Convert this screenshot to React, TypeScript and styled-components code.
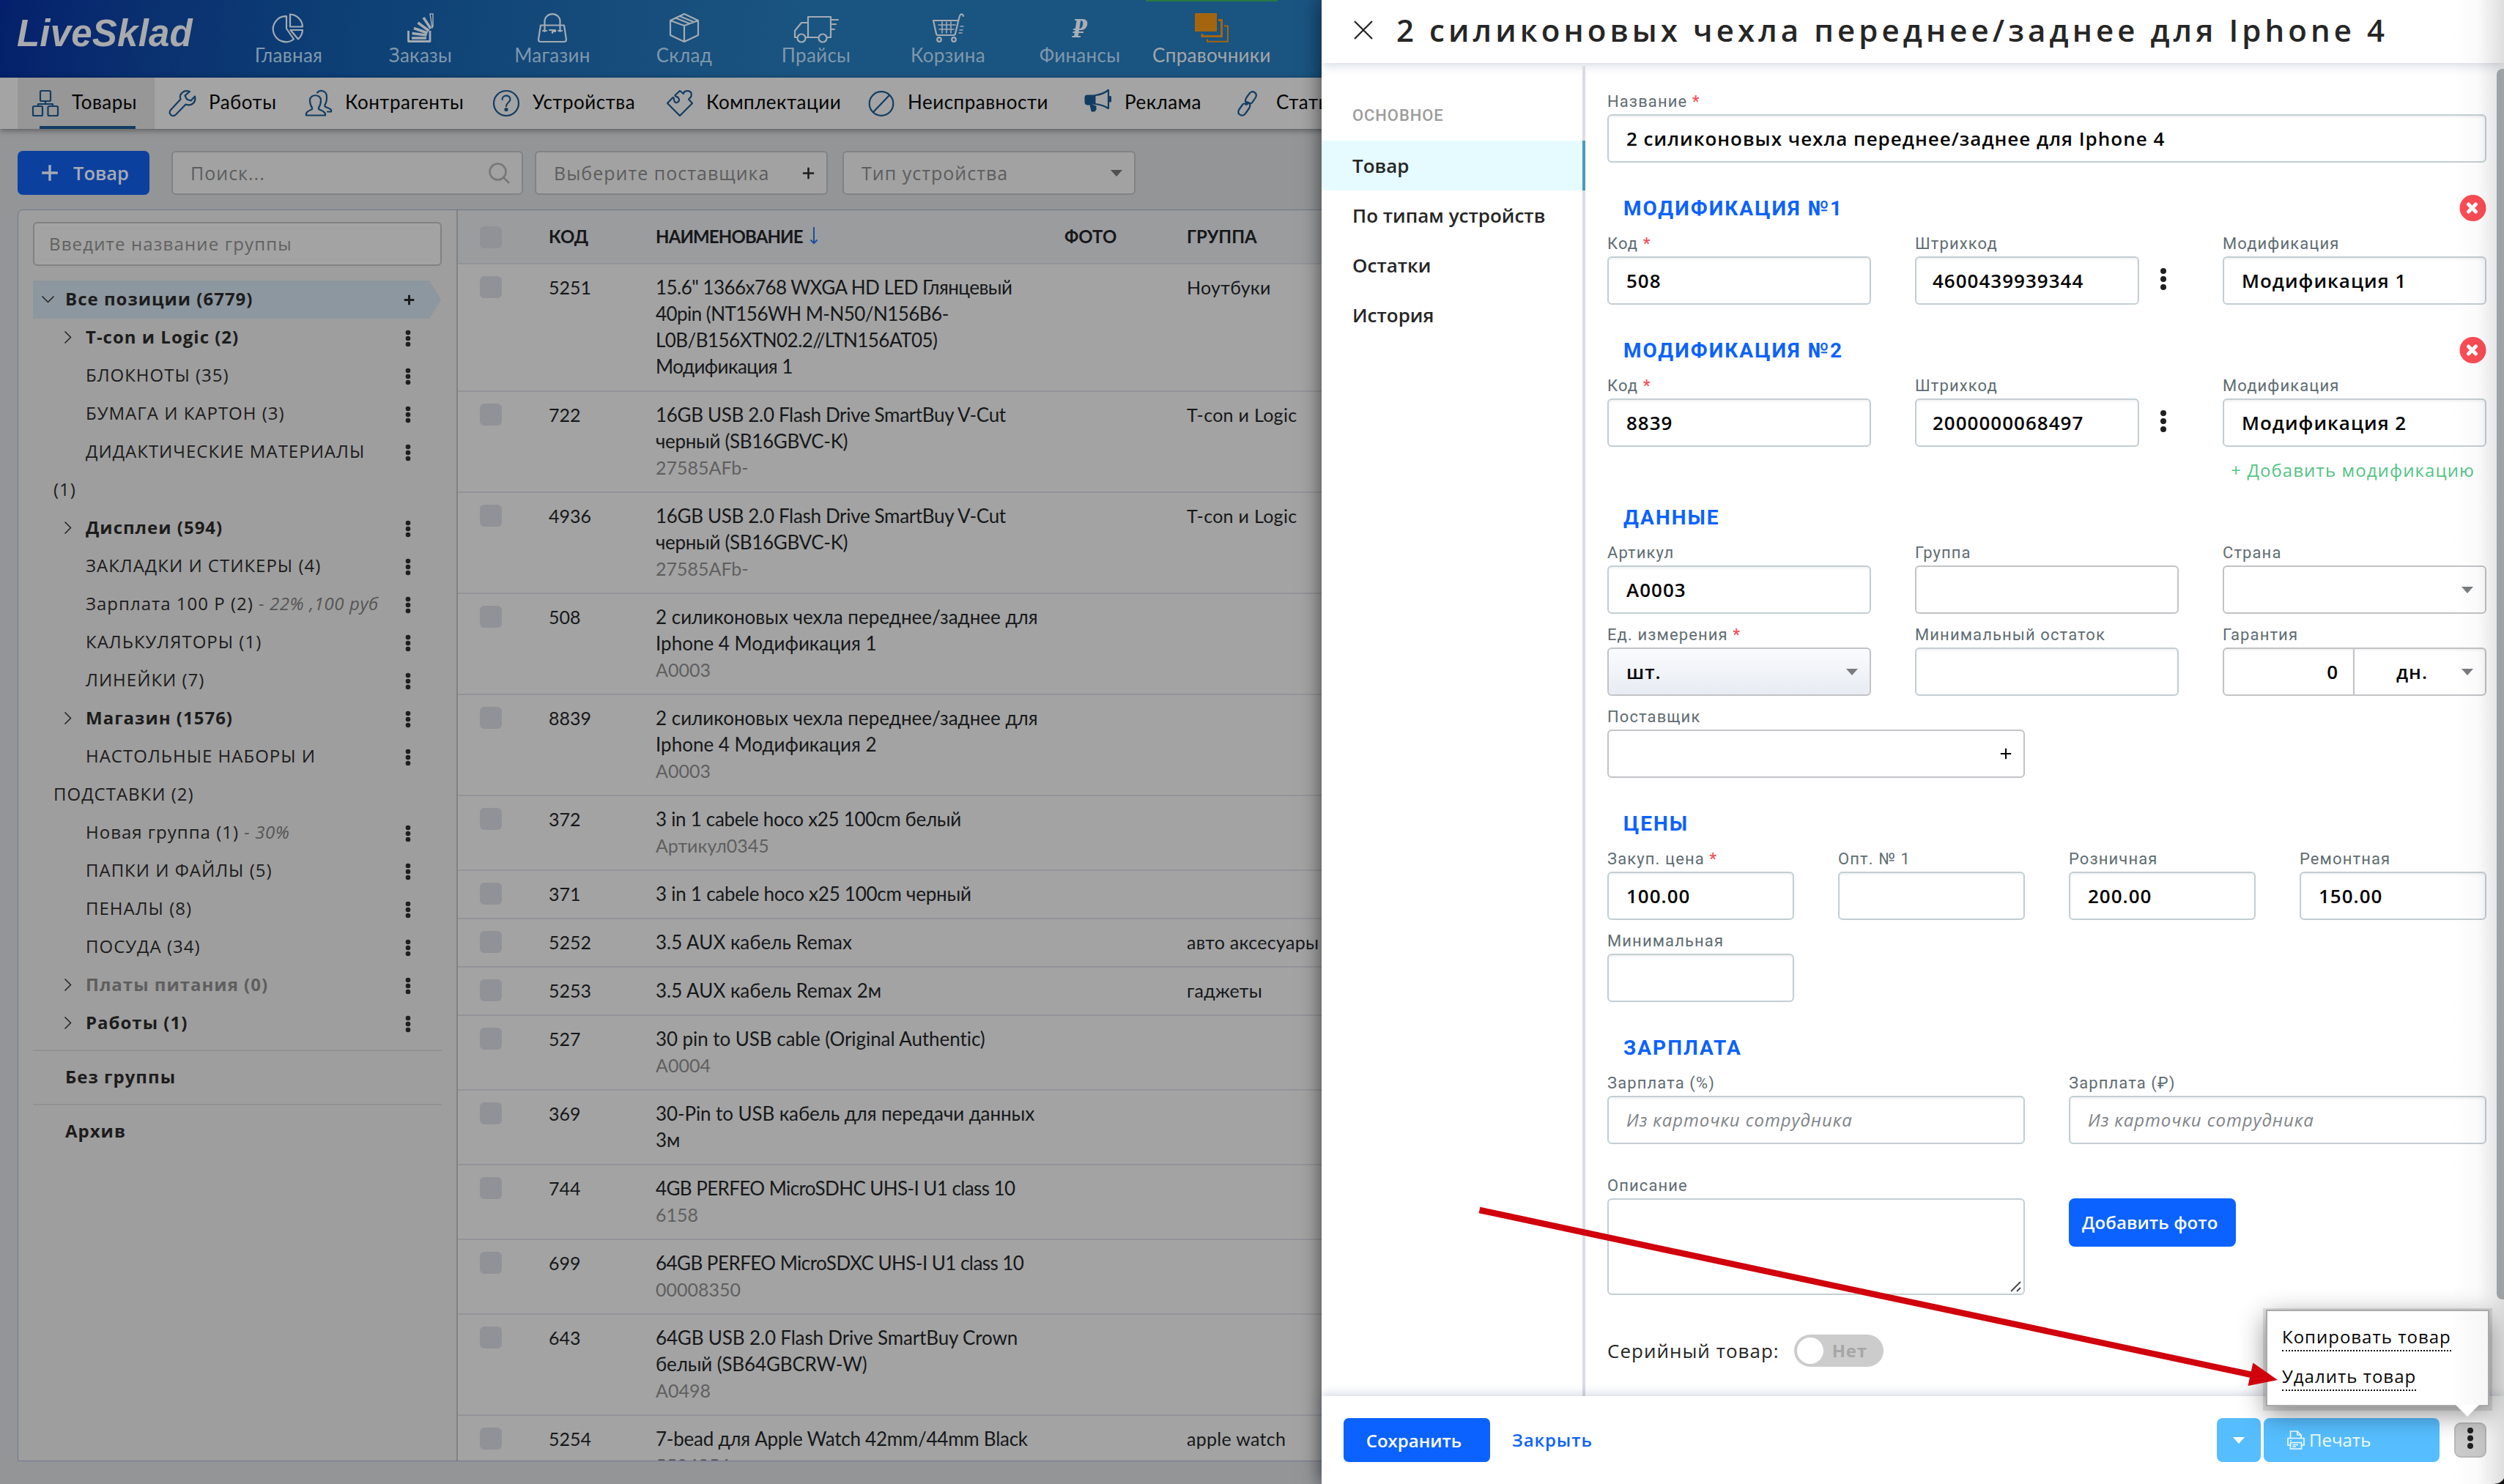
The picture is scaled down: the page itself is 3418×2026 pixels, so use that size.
import React from "react";
import styled, { createGlobalStyle, css } from "styled-components";

const ui = `"Open Sans", "Noto Sans", sans-serif`;
const grotesk = `Lato, Inter, sans-serif`;
const label = `Roboto, sans-serif`;

const GlobalStyle = createGlobalStyle`
  *, *::before, *::after { box-sizing: border-box; }
  html, body { margin: 0; padding: 0; background: #939597; }
  body { width: 3418px; height: 2026px; overflow: hidden; font-family: ${ui}; }
  button { font: inherit; border: 0; padding: 0; background: none; cursor: pointer; }
`;

/* ---------- application page ---------- */

const Screen = styled.div`
  position: relative;
  width: 3418px;
  height: 2026px;
  overflow: hidden;
  background: #939597;
`;

const Page = styled.div`
  display: flex;
  flex-direction: column;
  height: 100%;
  isolation: isolate;
`;

const TopBar = styled.header`
  display: flex;
  height: 106px;
  flex: none;
  background: linear-gradient(97deg, #04206c 0, #0a3070 200px, #0d4075 480px, #154b7b 800px, #1a5480 1100px, #1a5480 100%);
`;

const Logo = styled.div`
  width: 304px;
  padding: 17px 0 0 23px;
  font: italic bold 51px/58px "Liberation Sans", Arial, sans-serif;
  letter-spacing: 0.2px;
  color: #a9aaab;
`;

const NavItem = styled.a<{ $active?: boolean }>`
  display: flex;
  flex-direction: column;
  align-items: center;
  width: 180px;
  padding-top: ${(p) => (p.$active ? 16 : 18)}px;
  border-top: ${(p) => (p.$active ? "2px solid #277a42" : "0")};
  font: 26px/32px ${grotesk};
  letter-spacing: 0.3px;
  color: ${(p) => (p.$active ? "#a4a6a8" : "#7f98ab")};
  svg { display: block; height: 40px; margin-bottom: 1px; color: #a3abb2; overflow: visible; }
`;

const Ruble = styled.span`
  height: 41px;
  font: italic bold 34px/42px "DejaVu Serif", serif;
  color: #a9afb5;
  transform: scaleX(0.85);
`;

const SubNav = styled.nav`
  display: flex;
  flex: none;
  height: 70px;
  padding-left: 24px;
  background: #a4a4a4;
  box-shadow: 0 2px 8px rgba(0, 0, 0, 0.4);
  z-index: 1;
`;

const SubItem = styled.a<{ $w: number; $active?: boolean }>`
  position: relative;
  display: flex;
  flex: none;
  align-items: center;
  gap: 18px;
  width: ${(p) => p.$w}px;
  padding: 0 0 4px 20px;
  font: 26px/34px ${grotesk};
  letter-spacing: 0.5px;
  white-space: nowrap;
  color: #050505;
  background: ${(p) => (p.$active ? "#979797" : "transparent")};
  svg { width: 36px; height: 36px; flex: none; margin-top: 4px; color: #123d63; overflow: visible; }
  ${(p) =>
    p.$active &&
    css`
      &::after {
        content: "";
        position: absolute;
        left: 30px;
        bottom: 0;
        width: 131px;
        height: 4px;
        background: #123d63;
      }
    `}
`;

const Toolbar = styled.div`
  display: flex;
  flex: none;
  height: 110px;
  padding: 30px 24px 20px;
`;

const AddButton = styled.button`
  display: flex;
  align-items: center;
  gap: 20px;
  width: 180px;
  height: 60px;
  padding-left: 32px;
  margin-right: 30px;
  border-radius: 7px;
  background: #0c409f;
  color: #a7abb3;
  font: 600 25.5px/34px ${ui};
`;

const Field = styled.div<{ $w: number; $mr?: number }>`
  display: flex;
  align-items: center;
  justify-content: space-between;
  width: ${(p) => p.$w}px;
  height: 60px;
  margin-right: ${(p) => p.$mr ?? 0}px;
  padding: 0 16px 0 24px;
  border: 2px solid #828384;
  border-radius: 6px;
  background: #a2a2a2;
  color: #5c5d5e;
  font: 25px/36px ${ui};
  letter-spacing: 1px;
`;

const Workspace = styled.div`
  display: flex;
  flex: none;
  width: 3368px;
  height: 1709px;
  margin-left: 24px;
  overflow: hidden;
  border: 1px solid #70768f;
  border-radius: 8px 8px 0 0;
`;

const Groups = styled.aside`
  flex: none;
  width: 600px;
  padding: 16px 20px;
  border-right: 2px solid #828283;
  background: #9e9e9e;
  color: #1c1c1c;
  font: 24px/52px ${ui};
  letter-spacing: 1px;
`;

const GroupFilter = styled.div`
  width: 558px;
  height: 60px;
  padding: 0 20px;
  margin-bottom: 20px;
  border: 2px solid #828282;
  border-radius: 6px;
  background: #a3a3a3;
  color: #616161;
  font: 24px/56px ${ui};
  letter-spacing: 1.15px;
`;

const AllGroups = styled.div`
  display: flex;
  align-items: center;
  width: 557px;
  height: 52px;
  padding-left: 12px;
  background: #8c979f;
  clip-path: polygon(0 0, 541px 0, 100% 50%, 541px 100%, 0 100%);
  font-weight: 700;
  line-height: 50px;
  svg:first-child { margin-right: 15px; }
  span { flex: 1; height: 52px; }
  svg:last-child { margin-right: 36px; }
`;

const GroupRow = styled.div<{ $tone?: string }>`
  display: flex;
  align-items: flex-start;
  width: 558px;
  padding-left: 28px;
  color: ${(p) => p.$tone ?? "inherit"};
`;

const GroupText = styled.div<{ $bold?: boolean }>`
  width: 464px;
  margin: -1px 0 1px;
  font-weight: ${(p) => (p.$bold ? 700 : 400)};
  white-space: pre-line;
`;

const Indent = styled.span`
  display: inline-block;
  width: 44px;
  height: 52px;
  padding: 18px 0 0 15px;
  vertical-align: top;
  svg { display: block; }
`;

const Note = styled.em`
  font-size: 24px;
  line-height: 1;
  letter-spacing: 0.6px;
  color: #555;
`;

const GroupExtra = styled.div`
  width: 558px;
  height: 74px;
  padding-left: 44px;
  border-top: 2px solid #929292;
  font-weight: 700;
  line-height: 70px;
`;

const Gap = styled.div<{ $h: number }>`
  height: ${(p) => p.$h}px;
`;

const Table = styled.div`
  flex: 1;
  overflow: hidden;
  background: #a3a3a3;
  color: #16181a;
  font: 25px/36px ${grotesk};
`;

const TableRow = styled.div<{ $head?: boolean }>`
  display: grid;
  grid-template-columns: 94px 146px 558px 167px 1fr;
  height: ${(p) => (p.$head ? "74px" : "auto")};
  padding: ${(p) => (p.$head ? "18px 0 0 30px" : "13px 0 15px 30px")};
  border-bottom: 2px solid #939499;
  background: ${(p) => (p.$head ? "#9b9c9e" : "transparent")};
  font-weight: ${(p) => (p.$head ? 700 : 400)};
  font-size: ${(p) => (p.$head ? 24 : 25)}px;
`;

const Checkbox = styled.i<{ $head?: boolean }>`
  width: 30px;
  height: 30px;
  margin-top: ${(p) => (p.$head ? 4 : 3)}px;
  border-radius: 6px;
  background: #919298;
`;

const Cell = styled.div`
  white-space: pre-line;
`;

const GroupCell = styled(Cell)`
  letter-spacing: 0.3px;
`;

const SortCell = styled.div`
  display: flex;
  gap: 9px;
  letter-spacing: -0.85px;
  svg { margin-top: 5px; }
`;

const Name = styled.div<{ $track?: number }>`
  font-size: 26px;
  letter-spacing: ${(p) => p.$track ?? 0}px;
  white-space: pre-line;
`;

const Sku = styled.div`
  color: #5f5f60;
`;

/* ---------- drawer ---------- */

const Drawer = styled.section`
  position: absolute;
  top: 0;
  right: 0;
  display: flex;
  flex-direction: column;
  width: 1614px;
  height: 2026px;
  background: #fff;
  box-shadow: 0 0 26px rgba(0, 0, 0, 0.6);
`;

const DrawerHead = styled.header`
  display: flex;
  align-items: center;
  flex: none;
  gap: 32px;
  height: 86px;
  padding: 0 0 4px 44px;
  box-shadow: 0 2px 14px rgba(60, 70, 130, 0.24);
  color: #262626;
  font: 600 42px/56px ${ui};
  letter-spacing: 5.08px;
  white-space: nowrap;
`;

const DrawerBody = styled.div`
  display: flex;
  height: 1820px;
  flex: none;
`;

const Side = styled.nav`
  flex: none;
  width: 360px;
  margin-top: 4px;
  border-right: 4px solid #d8dce4;
`;

const SideTitle = styled.div`
  height: 102px;
  padding: 51px 0 0 42px;
  font: 500 22px/34px ${label};
  letter-spacing: 0.9px;
  color: #9c9c9c;
`;

const SideItem = styled.a<{ $active?: boolean }>`
  display: block;
  width: 360px;
  height: 68px;
  padding-left: 42px;
  border-right: ${(p) => (p.$active ? "4px solid #4a9bbd" : "0")};
  background: ${(p) => (p.$active ? "#e5fbff" : "transparent")};
  font: 600 26px/68px ${ui};
  color: #262626;
`;

const Form = styled.div`
  width: 1200px;
  margin-left: 30px;
  padding-top: 36px;
`;

const Row = styled.div<{ $mt?: number }>`
  display: flex;
  align-items: flex-end;
  gap: 60px;
  margin-top: ${(p) => p.$mt ?? 0}px;
`;

const Control = styled.div<{ $w: number }>`
  width: ${(p) => p.$w}px;
`;

const Label = styled.div`
  height: 34px;
  font: 22px/34px ${label};
  letter-spacing: 1.1px;
  white-space: nowrap;
  color: #5f6d73;
  b { color: #fb4c55; font-weight: 500; }
`;

const Input = styled.div<{ $w?: number; $kind?: "gray" | "filled" }>`
  display: flex;
  align-items: center;
  justify-content: space-between;
  width: ${(p) => (p.$w ? p.$w + "px" : "100%")};
  height: 66px;
  padding: 0 16px 0 24px;
  border: 2px solid ${(p) => (p.$kind ? "#c2c3c6" : "#c3ced3")};
  border-radius: 6px;
  background: ${(p) => (p.$kind === "filled" ? "linear-gradient(#fafbfd, #e7ecf3)" : "#fff")};
  box-shadow: ${(p) => (p.$kind ? "none" : "inset 0 2px 3px rgba(0, 0, 0, 0.06)")};
  color: #050505;
  font: 600 26px/36px ${ui};
  letter-spacing: 1px;
  white-space: nowrap;
`;

const Placeholder = styled.em`
  font-size: 24px;
  font-weight: 400;
  letter-spacing: 0.9px;
  color: #808488;
`;

const DotsSlot = styled.div`
  display: flex;
  align-items: center;
  height: 66px;
  padding: 0 0 4px 28px;
`;

const BarcodeRow = styled.div`
  display: flex;
`;

const Barcode = styled(Input)`
  padding-left: 22px;
`;

const SplitField = styled.div`
  display: flex;
`;

const Amount = styled(Input)`
  width: 180px;
  justify-content: flex-end;
  padding-right: 20px;
  border-radius: 6px 0 0 6px;
  border-color: #c2c3c6;
`;

const Period = styled(Input)`
  width: 180px;
  padding-left: 57px;
  border-left: 0;
  border-radius: 0 6px 6px 0;
  border-color: #c2c3c6;
`;

const SectionHead = styled.div<{ $mt?: number }>`
  display: flex;
  align-items: center;
  justify-content: space-between;
  height: 36px;
  margin: ${(p) => p.$mt ?? 44}px 0 14px;
  padding: 2px 0 0 22px;
  font: 700 28px/36px ${label};
  letter-spacing: 2px;
  color: #0b62ff;
  svg { margin-top: -2px; }
`;

const AddLink = styled.div`
  height: 36px;
  margin-top: 14px;
  padding-right: 16px;
  text-align: right;
  font: 24px/35px ${ui};
  letter-spacing: 1.1px;
  color: #52c483;
`;

const TextArea = styled.div`
  display: flex;
  align-items: flex-end;
  justify-content: flex-end;
  width: 570px;
  height: 132px;
  padding: 2px;
  border: 2px solid #c3ced3;
  border-radius: 6px;
`;

const PhotoButton = styled.button`
  align-self: flex-start;
  width: 228px;
  height: 66px;
  margin-top: 34px;
  padding-left: 18px;
  border-radius: 8px;
  background: #0b62ff;
  color: #fff;
  text-align: left;
  white-space: nowrap;
  font: 600 24px/64px ${ui};
  letter-spacing: 0.1px;
`;

const SerialRow = styled.div`
  display: flex;
  align-items: center;
  gap: 20px;
  margin-top: 54px;
  font: 26px/44px ${ui};
  letter-spacing: 1px;
  color: #262626;
`;

const Toggle = styled.div`
  display: flex;
  align-items: center;
  gap: 12px;
  width: 122px;
  height: 44px;
  padding-left: 4px;
  border-radius: 22px;
  background: #ccc;
  color: #a6a6a6;
  font: 700 24px/40px ${ui};
  letter-spacing: 0.8px;
  i { width: 36px; height: 36px; border-radius: 50%; background: #fff; }
`;

const Footer = styled.footer`
  display: flex;
  flex: none;
  align-items: flex-start;
  height: 120px;
  padding: 30px 24px 0 30px;
  background: #fff;
  box-shadow: 0 -2px 14px rgba(60, 70, 130, 0.24);
`;

const SaveButton = styled.button`
  width: 200px;
  height: 60px;
  margin-right: 30px;
  border-radius: 7px;
  background: #0b62ff;
  color: #fff;
  font: 600 24px/59px ${ui};
  padding-right: 8px;
`;

const CloseButton = styled.button`
  height: 60px;
  color: #0b62ff;
  font: 600 24px/60px ${ui};
  letter-spacing: 0.9px;
  margin-right: auto;
`;

const PrintCaret = styled.button`
  display: flex;
  align-items: center;
  justify-content: center;
  width: 60px;
  height: 60px;
  margin-right: 4px;
  border-radius: 8px;
  background: #56beff;
`;

const PrintButton = styled.button`
  display: flex;
  align-items: center;
  gap: 6px;
  width: 240px;
  height: 60px;
  margin-right: 20px;
  padding: 0 0 0 32px;
  border-radius: 8px;
  background: #56beff;
  color: #f4fbff;
  font: 24px/60px ${ui};
`;

const MoreButton = styled.button`
  display: flex;
  align-items: center;
  justify-content: center;
  width: 44px;
  height: 48px;
  margin-top: 6px;
  padding-bottom: 6px;
  border: 2px solid #b9b9b9;
  border-radius: 9px;
  background: #cbcbcb;
`;

const EdgeShade = styled.div`
  position: absolute;
  top: 0;
  right: 0;
  width: 72px;
  height: 2026px;
  background: linear-gradient(90deg, rgba(0, 0, 0, 0), rgba(0, 0, 0, 0.02) 50%, rgba(0, 0, 0, 0.13));
  pointer-events: none;
`;

const ScrollThumb = styled.div`
  position: absolute;
  top: 94px;
  right: 0;
  width: 10px;
  height: 1680px;
  border-radius: 8px 0 0 8px;
  background: #9da2a6;
`;

const Menu = styled.div`
  position: absolute;
  left: 3093px;
  top: 1788px;
  display: flex;
  flex-direction: column;
  align-items: flex-start;
  width: 305px;
  height: 132px;
  padding: 16px 20px;
  border: 2px solid #a9a9a9;
  background: linear-gradient(90deg, #fff 82%, #f6f6f6);
  box-shadow: 0 2px 0 4px rgba(0, 0, 0, 0.1), 0 10px 34px rgba(0, 0, 0, 0.45);
`;

const MenuLink = styled.a`
  height: 39px;
  margin-bottom: 15px;
  border-bottom: 2px dotted #111;
  color: #060606;
  font: 24px/38px ${ui};
  letter-spacing: 1px;
`;

const MenuTail = styled.div`
  position: absolute;
  left: 257px;
  top: 128px;
  width: 32px;
  height: 16px;
  background: #fff;
  clip-path: polygon(0 0, 100% 0, 50% 100%);
`;

const Pointer = styled.svg`
  position: absolute;
  left: 2000px;
  top: 1630px;
`;

const Corner = styled.svg`
  position: absolute;
  right: 0;
  bottom: 0;
`;

/* ---------- icons ---------- */

const line = { fill: "none", stroke: "currentColor", strokeWidth: 2.2, strokeLinejoin: "round" as const, strokeLinecap: "round" as const };

const PieIcon = () => (
  <svg width="40" height="40" viewBox="0 0 40 40" {...line}>
    <path d="M17 4.200A17.500 17.500 0 1 0 27 35.500L17 21Z" />
    <path d="M22 1.500A18 18 0 0 1 39 18.500H22Z" />
    <path d="M22.500 23H39A18 18 0 0 1 33 35.500Z" />
  </svg>
);
const StackIcon = () => (
  <svg width="36" height="40" viewBox="0 0 36 40" {...line} strokeLinecap="butt">
    <path d="M1.500 24V38.500H31V24" strokeWidth="2.800" />
    <path d="M6 34H26" strokeWidth="3.500" />
    <path d="M6.500 27.500L26.500 30M9 20.500L27.500 27M14.500 13L29.500 24" strokeWidth="3.500" />
    <path d="M22 6L32 21" strokeWidth="3.500" />
    <path d="M31 1H35V18L34 20Z" strokeWidth="1.500" />
  </svg>
);
const BagIcon = () => (
  <svg width="40" height="40" viewBox="0 0 40 40" {...line}>
    <path d="M4 16.500H36L39 36Q39 39 36 39H4Q1 39 1 36Z" />
    <path d="M9.500 25V11A10.500 9.800 0 0 1 30.500 11V25M7 24H12M28 24H33M16 23H24V25H20V27" />
  </svg>
);
const BoxIcon = () => (
  <svg width="40" height="40" viewBox="0 0 40 40" {...line}>
    <path d="M20 1L39 10V30L20 39L1 30V10ZM1 10L20 17L39 10M20 17V39M8 6.500L27 14M13.500 4L32 11.500" />
  </svg>
);
const TruckIcon = () => (
  <svg width="62" height="40" viewBox="0 0 62 40" {...line}>
    <path d="M5 33H2V24L11 13H19M17 33H33M46 33H51V5H20V32" />
    <path d="M51 9H61M51 15H58M51 22H56" />
    <circle cx="11" cy="34" r="5.500" />
    <circle cx="40" cy="34" r="5.500" />
  </svg>
);
const CartIcon = () => (
  <svg width="42" height="40" viewBox="0 0 42 40" {...line}>
    <path d="M42 4Q41 0 38 2Q37 3 36 7L31 28Q31 30 28 30H8Q5 30 5 28L1 10H34" />
    <path d="M8 16H31M9 22H29M13 12V27M19 12V27M25 12V27M38 18H42M37 23H41M36 27H40" strokeWidth="1.600" />
    <circle cx="9" cy="36" r="2.800" />
    <circle cx="29" cy="36" r="2.800" />
  </svg>
);
const LayersIcon = () => (
  <svg width="46" height="40" viewBox="0 0 46 40" fill="none" stroke="#a5650e" strokeWidth="3">
    <rect width="30" height="25" fill="#a5650e" stroke="none" />
    <path d="M32 9.500H36.500V31.500H10V28" />
    <path d="M40 17.500H45V38.800H17V35.500" strokeWidth="2" />
  </svg>
);

const SitemapIcon = () => (
  <svg viewBox="0 0 36 36" {...line}>
    <rect x="11" y="1" width="14" height="14" rx="1.500" />
    <rect x="1" y="22" width="13" height="13" rx="1.500" />
    <rect x="21.500" y="22" width="13.500" height="13" rx="1.500" />
    <path d="M18 15V19M8 21V19H28V21" />
  </svg>
);
const WrenchIcon = () => (
  <svg viewBox="0 0 36 36" {...line}>
    <path d="M28 2C20-1 13 5 15.500 12.500L2 27C-.5 30 1 33 2.500 34C4.500 35.600 7 35.500 9 33.500L22.500 19.500C30 22.500 37 17 35 8.500L29.500 14.500L24 12.500L21.500 7.500Z" />
  </svg>
);
const PeopleIcon = () => (
  <svg viewBox="0 0 36 36" {...line}>
    <path d="M1 34.500C0 30 4 28.500 9 26V24C6.500 20.500 6 17 6 14C6 5 21 5 21 14C21 17 20.500 20.500 18 24V26C23 28.500 28 30 27 34.500Z" />
    <path d="M16 3.500C20-1.500 29.500 1 29 9.500C29 14 28.500 17.500 26.500 20V22.500C31 24.500 36.500 26 35 29.500H30" />
  </svg>
);
const HelpIcon = () => (
  <svg viewBox="0 0 36 36" {...line}>
    <circle cx="18" cy="18" r="17" />
    <path d="M12.500 13C12.500 6 23.500 6 23.500 12.500C23.500 17 18 17 18 22" />
    <circle cx="18" cy="26.500" r="1.500" fill="currentColor" />
  </svg>
);
const PuzzleIcon = () => (
  <svg viewBox="0 0 36 36" {...line}>
    <path d="M18 35L1 18L8 10.500C11 9 9 14 11 16C14 19 19 15 16 10.500C14.500 8.500 11 9 11.500 7L18 1L23 5C23.500 0 32 0 33.500 4C35 9 32 11 30 12.500L35 18Z" />
  </svg>
);
const BanIcon = () => (
  <svg viewBox="0 0 36 36" {...line}>
    <circle cx="18" cy="18.500" r="16.300" />
    <path d="M29 7L7 30" />
  </svg>
);
const HornIcon = () => (
  <svg viewBox="0 0 36 36" {...line}>
    <path d="M0 9Q0 7 3 7H14V19H8L15 22V27H14Q15 29 12 29H9L7 20H3Q0 20 0 17Z" fill="currentColor" strokeWidth="1" />
    <path d="M14 7Q24 6 32 0V25Q24 20 14 19" />
    <path d="M33 9V16H35.500V9Z" fill="currentColor" strokeWidth="1" />
  </svg>
);
const LinkIcon = () => (
  <svg viewBox="0 0 36 36" {...line}>
    <path d="M15 19C10 16 12 12 15 8L18 4C22 0 29 4 26 10L22 16C21 18 18 19 16 17" />
    <path d="M13 16C18 17 20 20 17 25L12 32C9 37 0 34 3 27L8 20C9 18 12 18 13 20" />
  </svg>
);

const PlusIcon = ({ size = 18, w = 3, color = "currentColor" }: { size?: number; w?: number; color?: string }) => (
  <svg width={size} height={size} viewBox="0 0 20 20" stroke={color} strokeWidth={w}>
    <path d="M10 1V19M1 10H19" />
  </svg>
);
const Caret = ({ color = "#7a7d80", w = 16, h = 9 }: { color?: string; w?: number; h?: number }) => (
  <svg width={w} height={h} viewBox="0 0 16 9" preserveAspectRatio="none" fill={color}>
    <path d="M0 0H16L8 9Z" />
  </svg>
);
const DotsIcon = ({ gap = 8, r = 3.2 }: { gap?: number; r?: number }) => (
  <svg width="10" height={gap * 2 + r * 2} viewBox={`0 0 10 ${gap * 2 + r * 2}`} fill="#1f1f1f">
    <circle cx="5" cy={r} r={r} />
    <circle cx="5" cy={r + gap} r={r} />
    <circle cx="5" cy={r + gap * 2} r={r} />
  </svg>
);
const Chevron = ({ down }: { down?: boolean }) =>
  down ? (
    <svg width="17" height="10" viewBox="0 0 17 10" fill="none" stroke="#222" strokeWidth="1.500">
      <path d="M.5 .5L8.500 8.500L16.500 .5" />
    </svg>
  ) : (
    <svg width="10" height="17" viewBox="0 0 10 17" fill="none" stroke="#222" strokeWidth="1.500">
      <path d="M.5 .5L8.500 8.500L.5 16.500" />
    </svg>
  );
const SearchIcon = () => (
  <svg width="29" height="29" viewBox="0 0 29 29" fill="none" stroke="#77787a" strokeWidth="2.600">
    <circle cx="12.500" cy="12.500" r="11" />
    <path d="M20 20L28 28" />
  </svg>
);
const SortIcon = () => (
  <svg width="12" height="24" viewBox="0 0 12 24" fill="none" stroke="#1a4fa3" strokeWidth="2">
    <path d="M6 0V22M1.500 17.500L6 22L10.500 17.500" />
  </svg>
);
const CloseIcon = () => (
  <svg width="26" height="26" viewBox="0 0 26 26" fill="none" stroke="#222" strokeWidth="2.200">
    <path d="M1 1L25 25M25 1L1 25" />
  </svg>
);
const DeleteIcon = () => (
  <svg width="37" height="36" viewBox="0 0 37 36">
    <circle cx="18.500" cy="18" r="18" fill="#fb4c55" />
    <path d="M12.500 13L22.500 23M22.500 13L12.500 23" stroke="#fff" strokeWidth="5" strokeLinecap="round" />
  </svg>
);
const GripIcon = () => (
  <svg width="16" height="15" viewBox="0 0 16 15" stroke="#444" strokeWidth="1.800">
    <path d="M1 14L14 1M9 14L14 9" />
  </svg>
);
const PrinterIcon = () => (
  <svg width="24" height="26" viewBox="0 0 24 26" fill="none" stroke="#f4fbff" strokeWidth="1.700">
    <path d="M4.500 10V1H14L19 6V10M14 1V6H19M4.500 20H1V10.500H23V20H19.500M4.500 16.500H19.500V25H4.500ZM7.500 19.500H15M7.500 22H12M4 13.500H6" />
  </svg>
);

/* ---------- data ---------- */

const nav = [
  { text: "Главная", icon: <PieIcon /> },
  { text: "Заказы", icon: <StackIcon /> },
  { text: "Магазин", icon: <BagIcon /> },
  { text: "Склад", icon: <BoxIcon /> },
  { text: "Прайсы", icon: <TruckIcon /> },
  { text: "Корзина", icon: <CartIcon /> },
  { text: "Финансы", icon: <Ruble>₽</Ruble> },
  { text: "Справочники", icon: <LayersIcon />, active: true },
];

const subnav = [
  { text: "Товары", w: 187, icon: <SitemapIcon />, active: true },
  { text: "Работы", w: 186, icon: <WrenchIcon /> },
  { text: "Контрагенты", w: 256, icon: <PeopleIcon /> },
  { text: "Устройства", w: 237, icon: <HelpIcon /> },
  { text: "Комплектации", w: 275, icon: <PuzzleIcon /> },
  { text: "Неисправности", w: 296, icon: <BanIcon /> },
  { text: "Реклама", w: 207, icon: <HornIcon /> },
  { text: "Статьи", w: 180, icon: <LinkIcon /> },
];

type Group = { text: string; bold?: boolean; note?: string; muted?: boolean };
const groups: Group[] = [
  { text: "T-con и Logic (2)", bold: true },
  { text: "БЛОКНОТЫ (35)" },
  { text: "БУМАГА И КАРТОН (3)" },
  { text: "ДИДАКТИЧЕСКИЕ МАТЕРИАЛЫ\n(1)" },
  { text: "Дисплеи (594)", bold: true },
  { text: "ЗАКЛАДКИ И СТИКЕРЫ (4)" },
  { text: "Зарплата 100 Р (2)", note: "- 22% ,100 руб" },
  { text: "КАЛЬКУЛЯТОРЫ (1)" },
  { text: "ЛИНЕЙКИ (7)" },
  { text: "Магазин (1576)", bold: true },
  { text: "НАСТОЛЬНЫЕ НАБОРЫ И\nПОДСТАВКИ (2)" },
  { text: "Новая группа (1)", note: "- 30%" },
  { text: "ПАПКИ И ФАЙЛЫ (5)" },
  { text: "ПЕНАЛЫ (8)" },
  { text: "ПОСУДА (34)" },
  { text: "Платы питания (0)", bold: true, muted: true },
  { text: "Работы (1)", bold: true },
];

type Product = { code: string; name: string; sku?: string; group?: string; track?: number };
const products: Product[] = [
  { code: "5251", name: "15.6\" 1366x768 WXGA HD LED Глянцевый\n40pin (NT156WH M-N50/N156B6-\nL0B/B156XTN02.2//LTN156AT05)\nМодификация 1", group: "Ноутбуки", track: -0.55 },
  { code: "722", name: "16GB USB 2.0 Flash Drive SmartBuy V-Cut\nчерный (SB16GBVC-K)", sku: "27585AFb-", group: "T-con и Logic", track: -0.33 },
  { code: "4936", name: "16GB USB 2.0 Flash Drive SmartBuy V-Cut\nчерный (SB16GBVC-K)", sku: "27585AFb-", group: "T-con и Logic", track: -0.33 },
  { code: "508", name: "2 силиконовых чехла переднее/заднее для\nIphone 4 Модификация 1", sku: "А0003" },
  { code: "8839", name: "2 силиконовых чехла переднее/заднее для\nIphone 4 Модификация 2", sku: "А0003" },
  { code: "372", name: "3 in 1 cabele hoco x25 100cm белый", sku: "Артикул0345", track: -0.3 },
  { code: "371", name: "3 in 1 cabele hoco x25 100cm черный", track: -0.25 },
  { code: "5252", name: "3.5 AUX кабель Remax", group: "авто аксесуары" },
  { code: "5253", name: "3.5 AUX кабель Remax 2м", group: "гаджеты" },
  { code: "527", name: "30 pin to USB cable (Original Authentic)", sku: "А0004", track: -0.07 },
  { code: "369", name: "30-Pin to USB кабель для передачи данных\n3м", track: -0.1 },
  { code: "744", name: "4GB PERFEO MicroSDHC UHS-I U1 class 10", sku: "6158", track: -0.6 },
  { code: "699", name: "64GB PERFEO MicroSDXC UHS-I U1 class 10", sku: "00008350", track: -0.55 },
  { code: "643", name: "64GB USB 2.0 Flash Drive SmartBuy Crown\nбелый (SB64GBCRW-W)", sku: "А0498", track: -0.15 },
  { code: "5254", name: "7-bead для Apple Watch 42mm/44mm Black", sku: "5504254", group: "apple watch", track: -0.25 },
];

const modifications = [
  { n: 1, code: "508", barcode: "4600439939344" },
  { n: 2, code: "8839", barcode: "2000000068497" },
];

const Title = ({ text, required }: { text: string; required?: boolean }) => (
  <Label>
    {text} {required && <b>*</b>}
  </Label>
);

const TextField = ({ title, w, value, required, kind, children }: {
  title: string; w: number; value?: string; required?: boolean; kind?: "gray" | "filled"; children?: React.ReactNode;
}) => (
  <Control $w={w}>
    <Title text={title} required={required} />
    <Input $kind={kind}>
      <span>{value}</span>
      {children}
    </Input>
  </Control>
);

export default function App() {
  return (
    <Screen>
      <GlobalStyle />
      <Page>
        <TopBar>
          <Logo>LiveSklad</Logo>
          {nav.map((n) => (
            <NavItem key={n.text} $active={n.active}>
              {n.icon}
              {n.text}
            </NavItem>
          ))}
        </TopBar>
        <SubNav>
          {subnav.map((n) => (
            <SubItem key={n.text} $w={n.w} $active={n.active}>
              {n.icon}
              {n.text}
            </SubItem>
          ))}
        </SubNav>
        <Toolbar>
          <AddButton>
            <PlusIcon size={24} w={2.8} />
            Товар
          </AddButton>
          <Field $w={480} $mr={16}>
            Поиск...
            <SearchIcon />
          </Field>
          <Field $w={400} $mr={20}>
            Выберите поставщика
            <PlusIcon size={17} color="#1c1c1c" />
          </Field>
          <Field $w={400}>
            Тип устройства
            <Caret color="#4f5052" />
          </Field>
        </Toolbar>
        <Workspace>
          <Groups>
            <GroupFilter>Введите название группы</GroupFilter>
            <AllGroups>
              <Chevron down />
              <span>Все позиции (6779)</span>
              <PlusIcon size={15} w={4} />
            </AllGroups>
            {groups.map((g) => (
              <GroupRow key={g.text} $tone={g.muted ? "#5e5e5e" : undefined}>
                <GroupText $bold={g.bold}>
                  <Indent>{g.bold && <Chevron />}</Indent>
                  {g.text} {g.note && <Note>{g.note}</Note>}
                </GroupText>
                <Gap $h={52}>
                  <svg width="40" height="52" viewBox="0 0 40 52" fill="#1f1f1f">
                    <circle cx="20" cy="19" r="3.300" />
                    <circle cx="20" cy="27" r="3.300" />
                    <circle cx="20" cy="35" r="3.300" />
                  </svg>
                </Gap>
              </GroupRow>
            ))}
            <Gap $h={10} />
            <GroupExtra>Без группы</GroupExtra>
            <GroupExtra>Архив</GroupExtra>
          </Groups>
          <Table>
            <TableRow $head>
              <Checkbox $head />
              <Cell>КОД</Cell>
              <SortCell>
                НАИМЕНОВАНИЕ <SortIcon />
              </SortCell>
              <Cell>ФОТО</Cell>
              <Cell>ГРУППА</Cell>
            </TableRow>
            {products.map((p) => (
              <TableRow key={p.code}>
                <Checkbox />
                <Cell>{p.code}</Cell>
                <Cell>
                  <Name $track={p.track}>{p.name}</Name>
                  {p.sku && <Sku>{p.sku}</Sku>}
                </Cell>
                <Cell />
                <GroupCell>{p.group}</GroupCell>
              </TableRow>
            ))}
          </Table>
        </Workspace>
      </Page>

      <Drawer>
        <DrawerHead>
          <CloseIcon />
          2 силиконовых чехла переднее/заднее для Iphone 4
        </DrawerHead>
        <DrawerBody>
          <Side>
            <SideTitle>ОСНОВНОЕ</SideTitle>
            <SideItem $active>Товар</SideItem>
            <SideItem>По типам устройств</SideItem>
            <SideItem>Остатки</SideItem>
            <SideItem>История</SideItem>
          </Side>
          <Form>
            <TextField title="Название" required w={1200} value="2 силиконовых чехла переднее/заднее для Iphone 4" />
            {modifications.map((m) => (
              <React.Fragment key={m.n}>
                <SectionHead>
                  МОДИФИКАЦИЯ №{m.n}
                  <DeleteIcon />
                </SectionHead>
                <Row>
                  <TextField title="Код" required w={360} value={m.code} />
                  <Control $w={360}>
                    <Title text="Штрихкод" />
                    <BarcodeRow>
                      <Barcode $w={306}>{m.barcode}</Barcode>
                      <DotsSlot>
                        <DotsIcon gap={11} r={4} />
                      </DotsSlot>
                    </BarcodeRow>
                  </Control>
                  <TextField title="Модификация" w={360} value={`Модификация ${m.n}`} />
                </Row>
              </React.Fragment>
            ))}
            <AddLink>+ Добавить модификацию</AddLink>
            <SectionHead $mt={28}>ДАННЫЕ</SectionHead>
            <Row>
              <TextField title="Артикул" w={360} value="A0003" />
              <TextField title="Группа" w={360} kind="gray" />
              <TextField title="Страна" w={360} kind="gray">
                <Caret />
              </TextField>
            </Row>
            <Row $mt={12}>
              <TextField title="Ед. измерения" required w={360} kind="filled" value="шт.">
                <Caret />
              </TextField>
              <TextField title="Минимальный остаток" w={360} />
              <Control $w={360}>
                <Title text="Гарантия" />
                <SplitField>
                  <Amount>0</Amount>
                  <Period>
                    дн.
                    <Caret />
                  </Period>
                </SplitField>
              </Control>
            </Row>
            <Row $mt={12}>
              <TextField title="Поставщик" w={570} kind="gray">
                <PlusIcon size={16} w={2.6} />
              </TextField>
            </Row>
            <SectionHead>ЦЕНЫ</SectionHead>
            <Row>
              <TextField title="Закуп. цена" required w={255} value="100.00" />
              <TextField title="Опт. № 1" w={255} />
              <TextField title="Розничная" w={255} value="200.00" />
              <TextField title="Ремонтная" w={255} value="150.00" />
            </Row>
            <Row $mt={12}>
              <TextField title="Минимальная" w={255} />
            </Row>
            <SectionHead>ЗАРПЛАТА</SectionHead>
            <Row>
              {["Зарплата (%)", "Зарплата (₽)"].map((t) => (
                <Control key={t} $w={570}>
                  <Title text={t} />
                  <Input>
                    <Placeholder>Из карточки сотрудника</Placeholder>
                  </Input>
                </Control>
              ))}
            </Row>
            <Row $mt={40}>
              <Control $w={570}>
                <Title text="Описание" />
                <TextArea>
                  <GripIcon />
                </TextArea>
              </Control>
              <PhotoButton>Добавить фото</PhotoButton>
            </Row>
            <SerialRow>
              Серийный товар:
              <Toggle>
                <i />
                Нет
              </Toggle>
            </SerialRow>
          </Form>
        </DrawerBody>
        <Footer>
          <SaveButton>Сохранить</SaveButton>
          <CloseButton>Закрыть</CloseButton>
          <PrintCaret>
            <Caret color="#fff" />
          </PrintCaret>
          <PrintButton>
            <PrinterIcon />
            Печать
          </PrintButton>
          <MoreButton>
            <DotsIcon gap={10.5} r={4} />
          </MoreButton>
        </Footer>
        <EdgeShade />
        <ScrollThumb />
      </Drawer>

      <Menu>
        <MenuLink>Копировать товар</MenuLink>
        <MenuLink>Удалить товар</MenuLink>
        <MenuTail />
      </Menu>
      <Pointer width="1120" height="280" viewBox="2000 1630 1120 280">
        <path d="M2019.500 1652L3074 1877" stroke="#d0000c" strokeWidth="8.500" />
        <path d="M3109 1884L3075.400 1860.500L3068.500 1892Z" fill="#d0000c" />
      </Pointer>
      <Corner width="20" height="20" viewBox="0 0 20 20">
        <path d="M20 12V20H6Q17 19 20 12Z" fill="#111" />
      </Corner>
    </Screen>
  );
}
